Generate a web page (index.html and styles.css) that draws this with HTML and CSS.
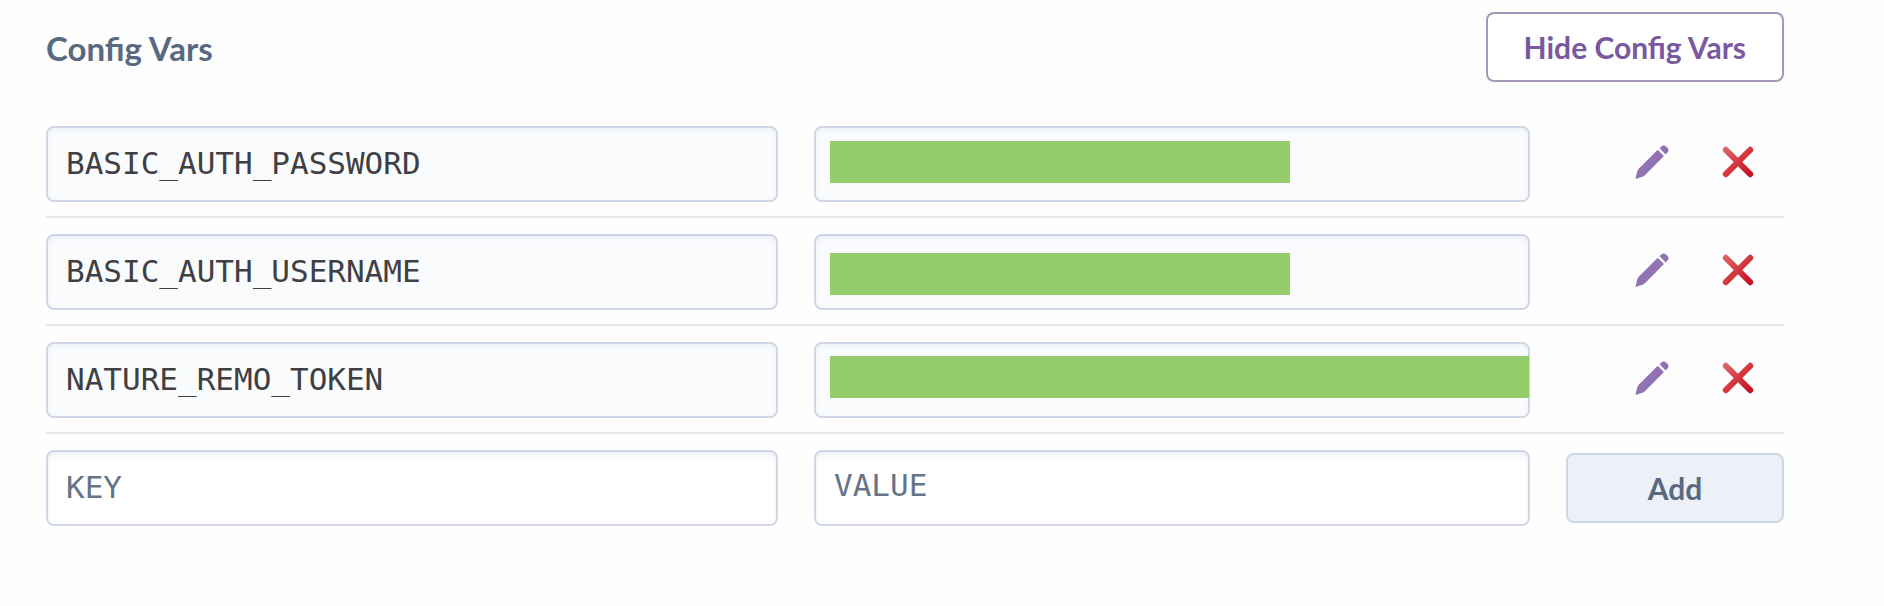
FILE: index.html
```html
<!DOCTYPE html>
<html lang="en">
  <head>
    <meta charset="UTF-8" />
    <meta name="viewport" content="width=device-width, initial-scale=1.0" />
    <title>Config Vars</title>
    <link rel="stylesheet" href="styles.css">
  </head>
  <body>
    <!-- Shared icons -->
    <svg class="sprite" aria-hidden="true">
      <linearGradient id="removeFill" gradientUnits="userSpaceOnUse" x1="2" y1="2" x2="32" y2="32">
        <stop offset="0" stop-color="#dc6a6c" />
        <stop offset="0.5" stop-color="#d5363f" />
        <stop offset="1" stop-color="#c50a20" />
      </linearGradient>
      <symbol id="pencil" viewBox="0 0 34 34">
        <path d="M0.5 34 L2.2 26.4 Q2.6 24.8 4 23.4 L22.7 4.8 L29 11 L10.4 29.8 Q9 31.2 7.4 31.7 Z" />
        <path d="M24.5 3.2 L26.2 1.5 Q28.8 -0.8 31.3 1.7 L32.2 2.6 Q34.8 5.2 32.4 7.6 L30.6 9.4 Z" />
      </symbol>
      <symbol id="cross" viewBox="0 0 34 34">
        <path d="M4.8 4.8 L29.2 29.2 M29.2 4.8 L4.8 29.2" />
      </symbol>
    </svg>

    <div class="container">
      <div class="header">
        <h2>Config Vars</h2>
        <button type="button" class="btn btn-outline">Hide Config Vars</button>
      </div>

      <!-- Existing vars -->
      <div class="var-row">
        <input class="field" type="text" value="BASIC_AUTH_PASSWORD" aria-label="Key" readonly />
        <div class="value">
          <input class="field" type="text" aria-label="Value of BASIC_AUTH_PASSWORD" readonly />
          <span class="mask"></span>
        </div>
        <div class="actions">
          <button type="button" class="icon-btn" aria-label="Edit"><svg class="edit"><use href="#pencil" /></svg></button>
          <button type="button" class="icon-btn" aria-label="Remove"><svg class="remove"><use href="#cross" /></svg></button>
        </div>
      </div>

      <div class="var-row">
        <input class="field" type="text" value="BASIC_AUTH_USERNAME" aria-label="Key" readonly />
        <div class="value">
          <input class="field" type="text" aria-label="Value of BASIC_AUTH_USERNAME" readonly />
          <span class="mask mask-low"></span>
        </div>
        <div class="actions">
          <button type="button" class="icon-btn" aria-label="Edit"><svg class="edit"><use href="#pencil" /></svg></button>
          <button type="button" class="icon-btn" aria-label="Remove"><svg class="remove"><use href="#cross" /></svg></button>
        </div>
      </div>

      <div class="var-row">
        <input class="field" type="text" value="NATURE_REMO_TOKEN" aria-label="Key" readonly />
        <div class="value">
          <input class="field" type="text" aria-label="Value of NATURE_REMO_TOKEN" readonly />
          <span class="mask mask-full"></span>
        </div>
        <div class="actions">
          <button type="button" class="icon-btn" aria-label="Edit"><svg class="edit"><use href="#pencil" /></svg></button>
          <button type="button" class="icon-btn" aria-label="Remove"><svg class="remove"><use href="#cross" /></svg></button>
        </div>
      </div>

      <!-- New var -->
      <form class="var-row">
        <input class="field" type="text" name="key" placeholder="KEY" aria-label="Key" />
        <textarea class="field" name="value" rows="1" placeholder="VALUE" aria-label="Value"></textarea>
        <button type="submit" class="btn btn-add">Add</button>
      </form>
    </div>
  </body>
</html>
```

FILE: styles.css
```css
* {
  box-sizing: border-box;
}
body {
  margin: 0;
  background: #fefefe;
  font-family: Lato, sans-serif;
}
.sprite {
  position: absolute;
  width: 0;
  height: 0;
}
.container {
  padding: 12px 100px 40px 46px;
}
.header {
  display: flex;
  justify-content: space-between;
  align-items: center;
  margin-bottom: 28px;
}
h2 {
  margin: 0;
  padding-top: 2px;
  font-size: 33px;
  font-weight: 700;
  line-height: 40px;
  color: #596981;
}
.btn {
  height: 70px;
  padding: 0 36px;
  border: 2px solid #cfd7e6;
  border-radius: 8px;
  font-family: inherit;
  font-size: 30px;
  font-weight: 700;
  cursor: pointer;
}
.btn-outline {
  border-color: #a596ba;
  background: #fff;
  color: #79589f;
}
.btn-add {
  background: #edf1f7;
  color: #596981;
}
.var-row {
  display: grid;
  grid-template-columns: 732fr 716fr 218px;
  column-gap: 36px;
  align-items: center;
  padding: 16px 0 14px;
  border-bottom: 2px solid #e4e7ee;
}
.var-row:last-child {
  border-bottom: none;
}
.field {
  display: block;
  width: 100%;
  height: 76px;
  padding: 0 18px 2px;
  border: 2px solid #cfd7e6;
  border-radius: 8px;
  background: #fff;
  box-shadow: inset 0 3px 5px #edf0f8;
  font-family: "DejaVu Sans Mono", monospace;
  font-size: 31px;
  color: #3f3f44;
}
.field:read-only {
  background: #fafbfd;
}
.field::placeholder {
  color: #667489;
  opacity: 1;
}
textarea.field {
  padding-top: 14px;
  line-height: 38px;
  resize: none;
  overflow: hidden;
}
.value {
  position: relative;
}
/* covers the secret value */
.mask {
  position: absolute;
  top: 15px;
  left: 16px;
  width: 460px;
  height: 42px;
  background: #94cc6a;
}
.mask-low {
  top: 19px;
}
.mask-full {
  top: 14px;
  right: 1px;
  width: auto;
}
.actions {
  display: flex;
  justify-content: flex-end;
  gap: 52px;
  padding: 0 29px 4px 0;
}
.icon-btn {
  width: 34px;
  height: 34px;
  padding: 0;
  border: none;
  background: none;
  cursor: pointer;
}
.icon-btn svg {
  display: block;
  width: 34px;
  height: 34px;
}
.edit {
  fill: #9173b3;
}
.remove {
  fill: none;
  stroke: url(#removeFill);
  stroke-width: 6;
  stroke-linecap: round;
}
```
